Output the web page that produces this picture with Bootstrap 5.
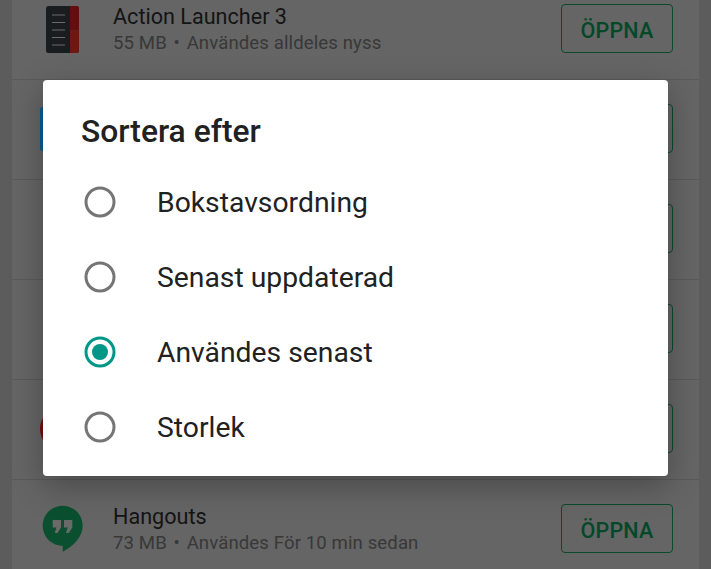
<!DOCTYPE html>
<html lang="sv">
<head>
<meta charset="utf-8">
<title>Sortera efter</title>
<link href="https://cdn.jsdelivr.net/npm/bootstrap@5.3.0/dist/css/bootstrap.min.css" rel="stylesheet">
<style>
html,body{height:100%;overflow:hidden}
body{background:#5c5c5c;font-family:Roboto,"Liberation Sans",sans-serif;position:relative;width:711px;height:569px}
.applist{margin:-21px 12px 0 12px;background:#656565}
.approw{height:100px;box-shadow:0 1px 0 #5a5a5a;padding-left:28px;padding-right:26px;box-sizing:border-box}
.appicon{width:44px;height:44px;flex:none;margin-right:29px;overflow:visible}
.appname{font-size:21.6px;line-height:26px;padding-top:1px;margin-bottom:1px;color:#141414}
.appmeta{font-size:18.6px;line-height:24px;color:#383838;letter-spacing:.1px}
.metadot{margin:0 2px}
.openbtn{width:112px;height:49px;margin-bottom:1px;border:1.5px solid #0a4a2d;border-radius:4px;color:#04482a;font-size:21.5px;font-weight:500;background:transparent;padding:5px 0 0;letter-spacing:.2px}
.sortdialog{position:absolute;left:43px;top:80px;width:624.5px;height:396px;background:#fff;border:0;border-radius:4px;box-shadow:0 10px 32px rgba(0,0,0,.28);padding:0}
.sorttitle{font-size:31.8px;font-weight:500;line-height:36px;color:#212121;margin:33px 0 0 38px}
.sortlist{margin-top:16px}
.sortopt{height:75px;padding-left:41px;font-size:28.3px;color:#212121}
.sortopt span{position:relative;top:1px}
.sortopt svg{width:32px;height:32px;flex:none;margin:0 41px 2px 0}
</style>
</head>
<body>
<div class="applist">
  <div class="approw d-flex align-items-center">
    <svg class="appicon" viewBox="0 0 44 44" aria-hidden="true"><rect x="6" y="-1" width="33" height="47" rx="2.500" fill="#1a1d20"/><path d="M30-1h6.500a2.500 2.500 0 0 1 2.500 2.500V22.500H30z" fill="#650e0d"/><path d="M30 22.500h9v21a2.500 2.500 0 0 1-2.500 2.500H30z" fill="#701810"/><path d="M12 8h13M12 15.500h13M12 23h13M12 30.500h13M12 38h13" stroke="#6a6a6a" stroke-width="1"/></svg>
    <div class="flex-grow-1"><div class="appname">Action Launcher 3</div><div class="appmeta">55 MB <span class="metadot">•</span> Användes alldeles nyss</div></div>
    <button class="openbtn btn" type="button">ÖPPNA</button>
  </div>
  <div class="approw d-flex align-items-center">
    <svg class="appicon" viewBox="0 0 44 44" aria-hidden="true"><rect width="44" height="44" rx="3" fill="#0b5c8f"/></svg>
    <div class="flex-grow-1"></div>
    <button class="openbtn btn" type="button">ÖPPNA</button>
  </div>
  <div class="approw d-flex align-items-center">
    <div class="flex-grow-1"></div>
    <button class="openbtn btn" type="button">ÖPPNA</button>
  </div>
  <div class="approw d-flex align-items-center">
    <div class="flex-grow-1"></div>
    <button class="openbtn btn" type="button">ÖPPNA</button>
  </div>
  <div class="approw d-flex align-items-center">
    <svg class="appicon" viewBox="0 0 44 44" aria-hidden="true"><circle cx="22" cy="22" r="22" fill="#720d0d"/></svg>
    <div class="flex-grow-1"></div>
    <button class="openbtn btn" type="button">ÖPPNA</button>
  </div>
  <div class="approw d-flex align-items-center">
    <svg class="appicon" viewBox="0 0 44 44" aria-hidden="true"><path d="M22.700-1.300C11.600-1.300 2.700 7.600 2.700 18.700S11.600 38.700 22.700 38.700V44.700C33 39.500 42.700 30 42.700 18.700 42.700 7.600 33.800-1.300 22.700-1.300z" fill="#0a5030"/><path d="M12.700 13H21v7.500L17.500 26h-2.800l1.800-5.500h-3.800zM24 13h8.300v7.500L28.800 26H26l1.800-5.500H24z" fill="#6a6a6a"/></svg>
    <div class="flex-grow-1"><div class="appname">Hangouts</div><div class="appmeta">73 MB <span class="metadot">•</span> Användes För 10 min sedan</div></div>
    <button class="openbtn btn" type="button">ÖPPNA</button>
  </div>
</div>

<div class="card sortdialog">
  <div class="sorttitle">Sortera efter</div>
  <div class="sortlist">
    <div class="sortopt d-flex align-items-center"><svg viewBox="0 0 32 32" aria-hidden="true"><circle cx="16" cy="16" r="14" fill="none" stroke="#757575" stroke-width="3"/></svg><span>Bokstavsordning</span></div>
    <div class="sortopt d-flex align-items-center"><svg viewBox="0 0 32 32" aria-hidden="true"><circle cx="16" cy="16" r="14" fill="none" stroke="#757575" stroke-width="3"/></svg><span>Senast uppdaterad</span></div>
    <div class="sortopt d-flex align-items-center"><svg viewBox="0 0 32 32" aria-hidden="true"><circle cx="16" cy="16" r="14" fill="none" stroke="#009688" stroke-width="3"/><circle cx="16" cy="16" r="8" fill="#009688"/></svg><span>Användes senast</span></div>
    <div class="sortopt d-flex align-items-center"><svg viewBox="0 0 32 32" aria-hidden="true"><circle cx="16" cy="16" r="14" fill="none" stroke="#757575" stroke-width="3"/></svg><span>Storlek</span></div>
  </div>
</div>
<script src="https://cdn.jsdelivr.net/npm/bootstrap@5.3.0/dist/js/bootstrap.bundle.min.js"></script>
</body>
</html>
